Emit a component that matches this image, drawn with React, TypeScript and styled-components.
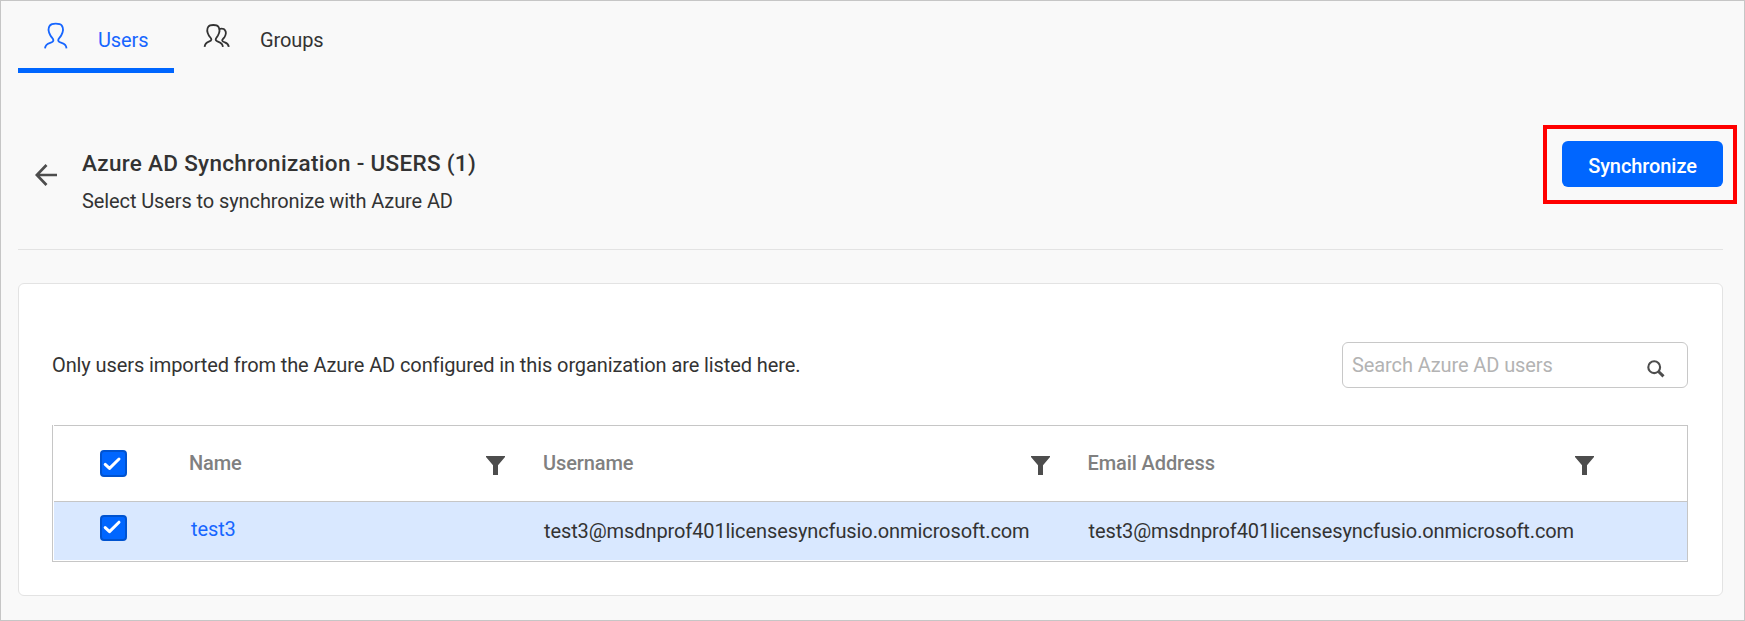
import React from "react";
import styled, { createGlobalStyle } from "styled-components";

const GlobalStyle = createGlobalStyle`
  *, *::before, *::after { box-sizing: border-box; }
  body {
    margin: 0;
    font-family: Roboto, "Liberation Sans", sans-serif;
    font-size: 20px;
    letter-spacing: -0.1px;
    color: #333;
  }
`;

const Page = styled.div`
  display: flex;
  flex-direction: column;
  width: 1745px;
  height: 621px;
  padding: 0 21px 0 17px;
  border: 1px solid #c6c6c6;
  background: #f9f9f9;
`;

const Tabs = styled.nav`
  display: flex;
  height: 72px;
`;

const Tab = styled.a<{ $active?: boolean }>`
  display: flex;
  align-items: flex-start;
  width: 156px;
  padding-left: 26px;
  border-bottom: 5px solid ${(p) => (p.$active ? "#0066ff" : "transparent")};
  color: ${(p) => (p.$active ? "#1766ff" : "#333")};
`;

const TabIcon = styled.svg<{ $gap: number }>`
  flex: none;
  margin: 19px ${(p) => p.$gap}px 0 0;
`;

const TabLabel = styled.span`
  line-height: 24px;
  margin-top: 27px;
`;

const Header = styled.header`
  display: flex;
  height: 177px;
  padding-top: 52px;
  border-bottom: 1px solid #e3e3e3;
`;

const BackButton = styled.button`
  display: flex;
  align-items: flex-start;
  width: 64px;
  padding: 39px 0 0 17px;
  border: 0;
  background: none;
`;

const Heading = styled.div`
  flex: 1;
  padding-top: 25px;
`;

const Title = styled.h1`
  margin: 0;
  font-size: 22.5px;
  letter-spacing: 0.3px;
  line-height: 26px;
  font-weight: 500;
`;

const Subtitle = styled.p`
  margin: 13px 0 0;
  line-height: 24px;
`;

const Highlight = styled.div`
  display: flex;
  width: 194px;
  height: 79px;
  margin-right: -14px;
  padding: 12px 0 0 15px;
  border: 4px solid #ff0000;
`;

const SyncButton = styled.button`
  width: 161px;
  height: 46px;
  padding: 3px 0 0;
  border: 0;
  border-radius: 6px;
  background: #0066ff;
  color: #fff;
  font: 500 20px Roboto, sans-serif;
  letter-spacing: -0.08px;
`;

const Card = styled.section`
  height: 313px;
  margin-top: 33px;
  padding: 58px 34px 0 33px;
  border: 1px solid #e3e3e3;
  border-radius: 6px;
  background: #fff;
`;

const CardTop = styled.div`
  display: flex;
  align-items: center;
  justify-content: space-between;
  height: 46px;
`;

const Note = styled.p`
  margin: 0;
  line-height: 24px;
`;

const Search = styled.label`
  display: flex;
  align-items: center;
  justify-content: space-between;
  width: 346px;
  height: 46px;
  padding: 0 22px 0 9px;
  border: 1px solid #c8c8c8;
  border-radius: 6px;
`;

const SearchInput = styled.input`
  flex: 1;
  min-width: 0;
  padding: 0;
  border: 0;
  outline: 0;
  background: none;
  font: 400 20px Roboto, sans-serif;
  letter-spacing: -0.1px;
  &::placeholder { color: #b3b3b3; }
`;

const SearchIcon = styled.svg`
  flex: none;
  margin-top: 7px;
`;

const Table = styled.div`
  height: 137px;
  margin-top: 37px;
  padding-left: 1px;
  border: 1px solid #c6c6c6;
  border-top: 0;
`;

const Row = styled.div<{ $head?: boolean }>`
  display: grid;
  grid-template-columns: 114px 354px 544.5px 544.5px 1fr;
  height: ${(p) => (p.$head ? 77 : 58)}px;
  border: solid #c6c6c6;
  border-width: ${(p) => (p.$head ? "1px 0" : "0")};
  background: ${(p) => (p.$head ? "#fff" : "#d9e8ff")};
`;

const CheckCell = styled.div<{ $top: number }>`
  padding: ${(p) => p.$top}px 0 0 46px;
`;

const CheckBox = styled.span<{ $height: number }>`
  display: block;
  width: 27px;
  height: ${(p) => p.$height}px;
  border: 2px solid #0053d0;
  border-radius: 4px;
  background: #0066ff;
`;

const CheckMark = styled.svg`
  display: block;
`;

const HeadCell = styled.div`
  display: flex;
  justify-content: space-between;
  padding: 25px 17px 0 21px;
  line-height: 24px;
  font-weight: 500;
  color: #808080;
`;

const FilterIcon = styled.svg`
  flex: none;
  margin-top: 5px;
`;

const Cell = styled.div<{ $link?: boolean }>`
  padding: ${(p) => (p.$link ? "15px 0 0 23px" : "17px 0 0 22px")};
  line-height: 24px;
  color: ${(p) => (p.$link ? "#1766ff" : "#333")};
`;

const Check = ({ height = 27 }: { height?: number }) => (
  <CheckBox $height={height}>
    <CheckMark width="23" height="22" viewBox="0 0 23 22">
      <path
        d={height === 27 ? "M3.2 12.4 7.5 16.4 17 7" : "M3.2 10.6 7.5 14.6 17 5.2"}
        fill="none"
        stroke="#fff"
        strokeWidth="3"
        strokeLinecap="round"
        strokeLinejoin="round"
      />
    </CheckMark>
  </CheckBox>
);

const Filter = () => (
  <FilterIcon width="19" height="19" viewBox="0 0 19 19">
    <path d="M0 0H19V1L12 9.3V19H7V9.3L0 1Z" fill="#4d4d4d" />
  </FilterIcon>
);

const columns = ["Name", "Username", "Email Address"];
const email = "test3@msdnprof401licensesyncfusio.onmicrosoft.com";

export default function App() {
  return (
    <>
      <GlobalStyle />
      <Page>
        <Tabs>
          <Tab $active>
            <TabIcon $gap={27} width="27" height="30" viewBox="0 0 27 30" fill="none" stroke="currentColor" strokeWidth="1.8">
              <path d="M1 28.4C1.2 25 3 23.7 6.2 22.8C8.2 22.2 9.4 21.6 9.4 20.2C9.4 18.7 7.6 17.6 6.3 15.3C4.5 12 4 8 5.8 5.6C7.1 3.8 9.1 3.7 11.7 3.7C14.4 3.7 16.5 3.8 17.8 5.6C19.5 8 19.1 12 17.3 15.3C16 17.6 14.2 18.7 14.2 20.2C14.2 21.6 15.6 22.2 17.6 22.8C20.8 23.7 22.3 25 22.5 28.4" />
            </TabIcon>
            <TabLabel>Users</TabLabel>
          </Tab>
          <Tab>
            <TabIcon $gap={30} width="30" height="30" viewBox="0 0 30 30" fill="none" stroke="currentColor" strokeWidth="1.8">
              <path d="M4.6 26.9C4.9 24 6 22.7 8.8 21.7C10.5 21.1 11.4 20.8 11.4 19.6C11.4 18 9.8 17.3 8.8 15.4C7.2 12.4 6.7 9 8.3 6.7C9.3 5.2 11 5 13.3 5C15.7 5 17.4 5.2 18.4 6.7C20 9 19.6 12.4 18 15.4C16.8 17.5 15.7 18.2 15.7 19.6C15.7 20.8 16.7 21.2 18.5 21.8C21.3 22.7 22.7 24 22.9 26.9" />
              <path d="M18.7 9.1C21.5 8.4 24.1 8.4 25.2 10.5C26.4 12.6 25.7 15.2 24.4 17.2C23.3 18.8 22.2 19.5 22.2 20.5C22.2 21.4 23.2 21.9 24.8 22.4C27.2 23.1 28.5 24.2 28.8 26.9" />
            </TabIcon>
            <TabLabel>Groups</TabLabel>
          </Tab>
        </Tabs>
        <Header>
          <BackButton aria-label="Back">
            <svg width="22" height="22" viewBox="0 0 22 22" fill="none" stroke="#4d4d4d" strokeWidth="2.7">
              <path d="M22 11H2M11.5 1 1.8 11 11.5 21" />
            </svg>
          </BackButton>
          <Heading>
            <Title>Azure AD Synchronization - USERS (1)</Title>
            <Subtitle>Select Users to synchronize with Azure AD</Subtitle>
          </Heading>
          <Highlight>
            <SyncButton>Synchronize</SyncButton>
          </Highlight>
        </Header>
        <Card>
          <CardTop>
            <Note>Only users imported from the Azure AD configured in this organization are listed here.</Note>
            <Search>
              <SearchInput placeholder="Search Azure AD users" />
              <SearchIcon width="18" height="18" viewBox="0 0 18 18" fill="none" stroke="#4d4d4d">
                <circle cx="7.2" cy="7.2" r="5.9" strokeWidth="2.1" />
                <path d="M11 11 16.5 16.3" strokeWidth="3" />
              </SearchIcon>
            </Search>
          </CardTop>
          <Table>
            <Row $head>
              <CheckCell $top={24}><Check /></CheckCell>
              {columns.map((name) => (
                <HeadCell key={name}>{name}<Filter /></HeadCell>
              ))}
            </Row>
            <Row>
              <CheckCell $top={13}><Check height={26} /></CheckCell>
              <Cell $link>test3</Cell>
              <Cell>{email}</Cell>
              <Cell>{email}</Cell>
            </Row>
          </Table>
        </Card>
      </Page>
    </>
  );
}
